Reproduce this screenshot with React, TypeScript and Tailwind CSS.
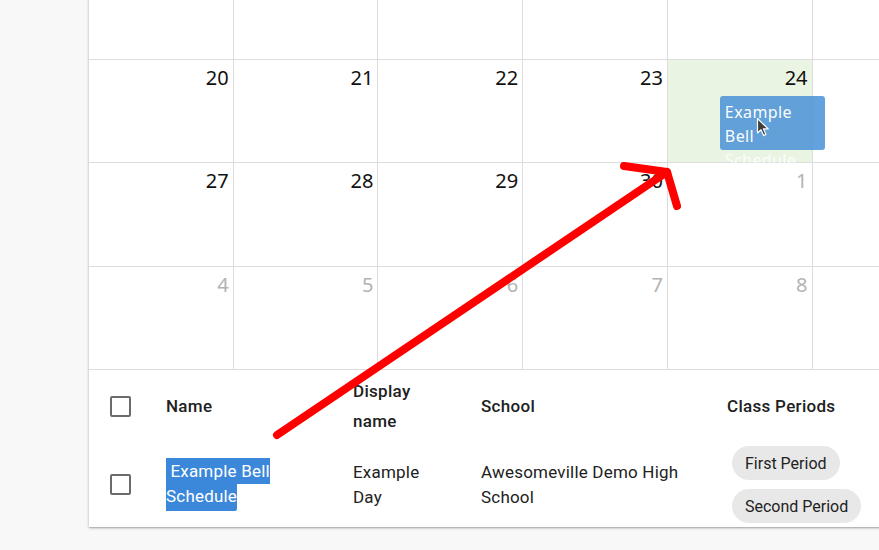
import React from "react";

type Day = { label: string; muted?: boolean; today?: boolean };

const weeks: { height: string; days: Day[] }[] = [
  { height: "h-[104px]", days: [{ label: "" }, { label: "" }, { label: "" }, { label: "" }, { label: "" }, { label: "" }, { label: "" }] },
  {
    height: "h-[103px]",
    days: [{ label: "20" }, { label: "21" }, { label: "22" }, { label: "23" }, { label: "24", today: true }, { label: "25" }, { label: "26" }],
  },
  {
    height: "h-[104px]",
    days: [{ label: "27" }, { label: "28" }, { label: "29" }, { label: "30" }, { label: "1", muted: true }, { label: "2", muted: true }, { label: "3", muted: true }],
  },
  {
    height: "h-[103px]",
    days: [
      { label: "4", muted: true },
      { label: "5", muted: true },
      { label: "6", muted: true },
      { label: "7", muted: true },
      { label: "8", muted: true },
      { label: "9", muted: true },
      { label: "10", muted: true },
    ],
  },
];

const Checkbox: React.FC = () => (
  <span className="block w-[21px] h-[21px] rounded-[2px] border-2 border-[#6b6b6b]" />
);

const Chip: React.FC<{ label: string }> = ({ label }) => (
  <span className="inline-flex items-center h-[34px] px-[13px] rounded-full bg-[#e8e8e8] text-[16px] tracking-normal text-[#222]">
    {label}
  </span>
);

const DragGhost: React.FC = () => (
  <div className="absolute left-[52px] top-[36px] w-[105px] h-[54px] rounded-[3px] bg-[#4a92d8] opacity-[0.85] pl-[5px] pt-[4px] text-left text-white text-[16px] leading-[24px] tracking-[0.4px] z-10">
    Example
    <br />
    Bell
    <br />
    Schedule
  </div>
);

const Cursor: React.FC = () => (
  <svg className="absolute left-[756px] top-[117px] z-20" width="16" height="22" viewBox="0 0 16 22">
    <path d="M1.5 1.5 L1.5 16 L5 12.8 L7.6 18.6 L10 17.5 L7.5 11.9 L12.2 11.9 Z" fill="#3f3f3f" stroke="#ffffff" strokeWidth="1.2" strokeLinejoin="round" />
  </svg>
);

const App: React.FC = () => {
  return (
    <div className="relative w-[879px] h-[550px] overflow-hidden bg-[#f8f8f8]">
      <div className="pl-[89px] -mt-[44px]">
        {/* Card */}
        <div className="w-[1013px] bg-white shadow-[0_1px_3px_rgba(0,0,0,0.25),0_1px_1px_rgba(0,0,0,0.12)]">
          {/* Calendar month grid */}
          <div className="font-['Noto_Sans',sans-serif]">
            {weeks.map((week, w) => (
              <div key={w} className={`grid grid-cols-7 border-b border-[#dddddd] ${week.height}`}>
                {week.days.map((day, d) => (
                  <div
                    key={d}
                    className={`relative border-r border-[#dddddd] pt-[4px] pr-[4px] text-right text-[20px] leading-[28px] ${
                      day.muted ? "text-[#b3b3b3]" : "text-[#111]"
                    } ${day.today ? "bg-[#eaf4e3]" : ""}`}
                  >
                    {day.label}
                    {day.today && <DragGhost />}
                  </div>
                ))}
              </div>
            ))}
          </div>

          {/* Schedules table */}
          <div className="font-['Roboto',sans-serif] text-[#212121]">
            <div className="grid grid-cols-[77px_187px_128px_246px_1fr] items-center h-[74px] pb-[2px] font-medium text-[17px] leading-[30px] tracking-[0.3px]">
              <div className="pl-[21px]">
                <Checkbox />
              </div>
              <div>Name</div>
              <div className="w-[88px]">Display name</div>
              <div>School</div>
              <div>Class Periods</div>
            </div>
            <div className="grid grid-cols-[77px_187px_128px_246px_1fr] items-center h-[83px] pb-[2px] text-[17px] leading-[25px] tracking-[0.2px]">
              <div className="pl-[21px]">
                <Checkbox />
              </div>
              <div className="flex flex-col items-start">
                <span className="bg-[#3b87d9] text-white h-[26px] leading-[26px] whitespace-pre">{" Example Bell"}</span>
                <span className="bg-[#3b87d9] text-white h-[27px] leading-[25px] rounded-br-[2px]">Schedule</span>
              </div>
              <div className="w-[88px]">Example Day</div>
              <div className="w-[222px]">Awesomeville Demo High School</div>
              <div className="flex flex-col items-start gap-[9px] pl-[5px]">
                <Chip label="First Period" />
                <Chip label="Second Period" />
              </div>
            </div>
          </div>
        </div>
      </div>

      <Cursor />

      {/* Annotation arrow */}
      <svg className="absolute inset-0 pointer-events-none z-30" width="879" height="550" viewBox="0 0 879 550">
        <g stroke="#ff0000" strokeWidth="8" strokeLinecap="round" strokeLinejoin="round" fill="none">
          <path d="M277 435 L667 172" />
          <path d="M624 166 L667 172 L677 206" />
        </g>
      </svg>
    </div>
  );
};

export default App;
